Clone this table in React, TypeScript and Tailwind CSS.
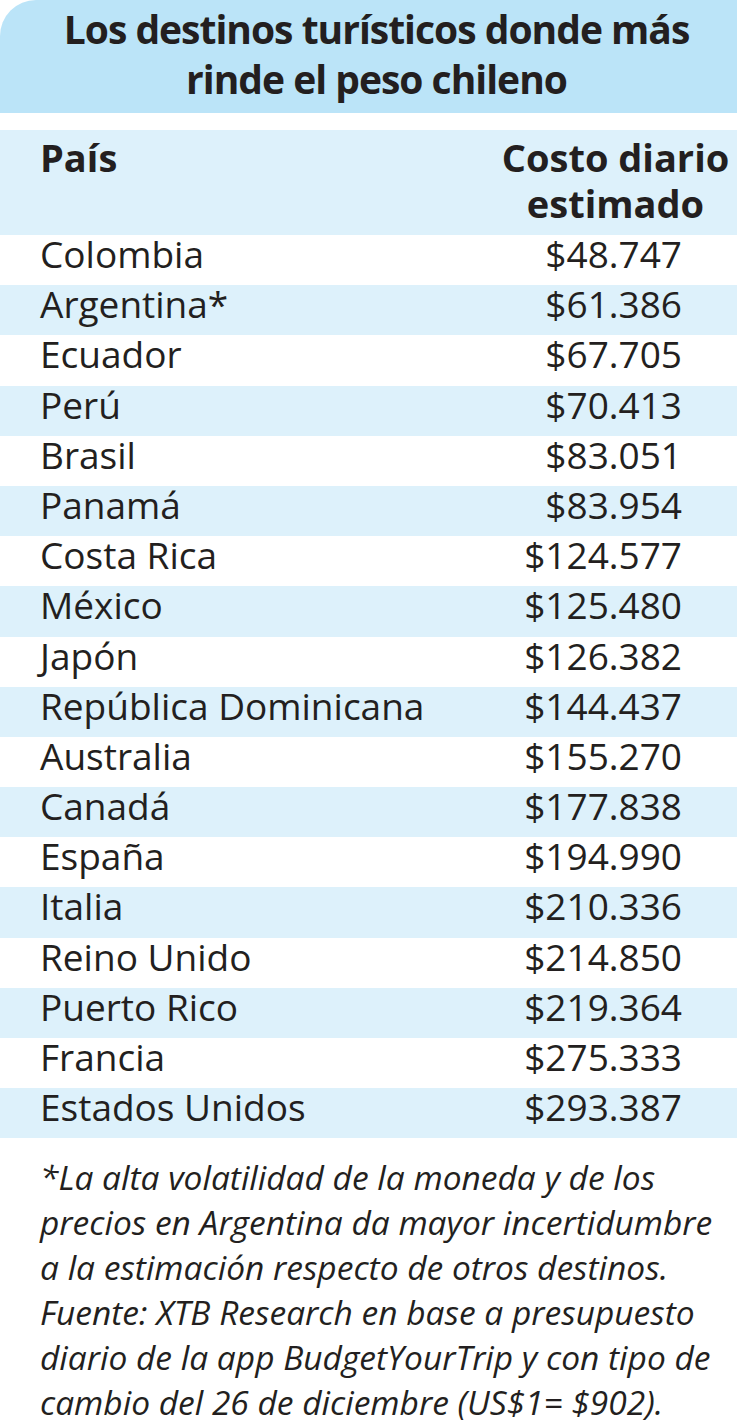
import React from "react";

interface Destino {
  pais: string;
  costo: string;
}

const destinos: Destino[] = [
  { pais: "Colombia", costo: "$48.747" },
  { pais: "Argentina*", costo: "$61.386" },
  { pais: "Ecuador", costo: "$67.705" },
  { pais: "Perú", costo: "$70.413" },
  { pais: "Brasil", costo: "$83.051" },
  { pais: "Panamá", costo: "$83.954" },
  { pais: "Costa Rica", costo: "$124.577" },
  { pais: "México", costo: "$125.480" },
  { pais: "Japón", costo: "$126.382" },
  { pais: "República Dominicana", costo: "$144.437" },
  { pais: "Australia", costo: "$155.270" },
  { pais: "Canadá", costo: "$177.838" },
  { pais: "España", costo: "$194.990" },
  { pais: "Italia", costo: "$210.336" },
  { pais: "Reino Unido", costo: "$214.850" },
  { pais: "Puerto Rico", costo: "$219.364" },
  { pais: "Francia", costo: "$275.333" },
  { pais: "Estados Unidos", costo: "$293.387" },
];

const notas = [
  "*La alta volatilidad de la moneda y de los",
  "precios en Argentina da mayor incertidumbre",
  "a la estimación respecto de otros destinos.",
  "Fuente: XTB Research en base a presupuesto",
  "diario de la app BudgetYourTrip y con tipo de",
  "cambio del 26 de diciembre (US$1= $902).",
];

export default function App() {
  return (
    <div className="w-[742px] h-[1426px] overflow-hidden bg-white text-[#231f20] font-['Open_Sans',sans-serif]">
      {/* Titulo */}
      <div className="w-[737px] h-[113px] bg-[#bbe4f8] rounded-tl-[36px] pt-[4px] pl-[16px] text-center">
        <h1 className="text-[39px] leading-[50px] font-bold tracking-[-1px]">
          Los destinos turísticos donde más
          <br />
          rinde el peso chileno
        </h1>
      </div>

      {/* Tabla */}
      <div className="w-[737px] mt-[17px]">
        <div className="flex h-[105px] bg-[#ddf1fb] pt-[4px] text-[38px] leading-[46px] font-bold">
          <div className="flex-1 pl-[40px]">País</div>
          <div className="w-[243px] text-center">
            Costo diario
            <br />
            estimado
          </div>
        </div>

        {destinos.map((d, i) => (
          <div
            key={d.pais}
            className={`flex h-[50.2px] text-[37px] leading-[38px] ${
              i % 2 === 1 ? "bg-[#ddf1fb]" : "bg-white"
            }`}
          >
            <div className="flex-1 pl-[40px] whitespace-nowrap">{d.pais}</div>
            <div className="w-[243px] pr-[55px] text-right">{d.costo}</div>
          </div>
        ))}
      </div>

      {/* Nota al pie */}
      <div className="pt-[17px] pl-[40px] text-[33.5px] leading-[45px] italic">
        {notas.map((n) => (
          <p key={n} className="whitespace-nowrap">
            {n}
          </p>
        ))}
      </div>
    </div>
  );
}
